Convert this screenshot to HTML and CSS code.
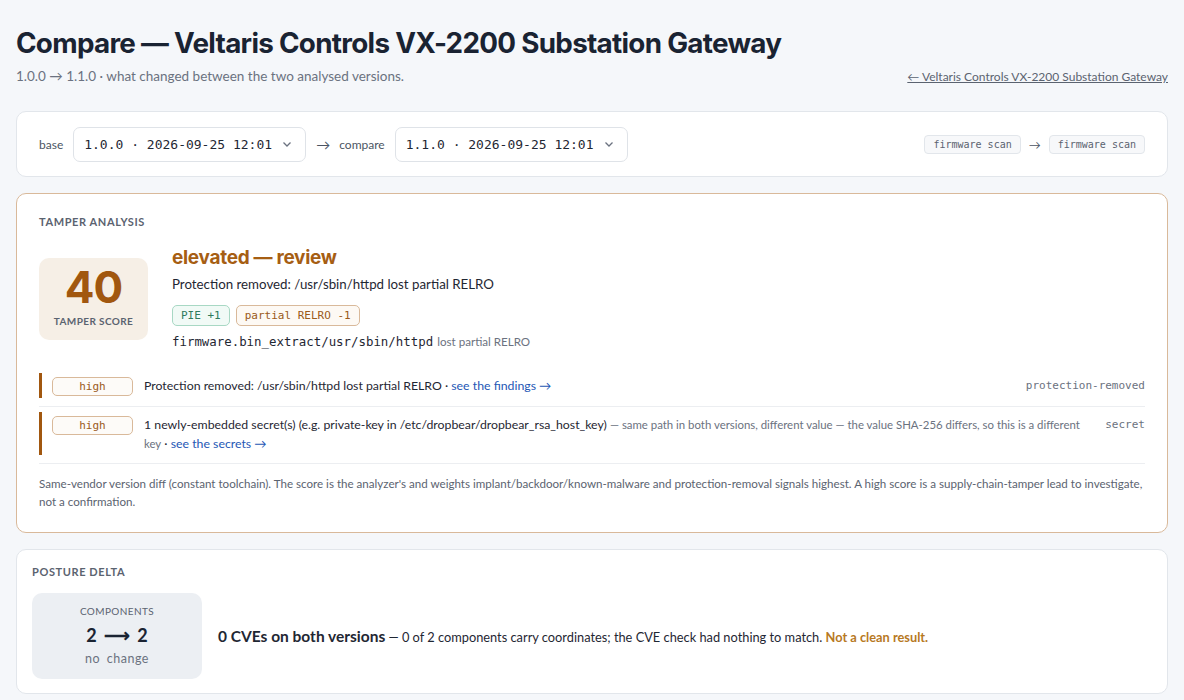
FILE: index.html
```html
<!DOCTYPE html>
<html>
<head>
<meta charset="utf-8">
<link rel="stylesheet" href="styles.css">
</head>
<body>
<div class="page">
  <header class="head">
    <div>
      <h1 class="title">Compare — Veltaris Controls VX-2200 Substation Gateway</h1>
      <div class="sub">1.0.0 → 1.1.0 · what changed between the two analysed versions.</div>
    </div>
    <a class="back" href="#">← Veltaris Controls VX-2200 Substation Gateway</a>
  </header>

  <section class="card picker">
    <span class="lbl">base</span>
    <div class="select"><span>1.0.0 · 2026-09-25 12:01</span><svg class="chev" viewBox="0 0 12 12" width="12" height="12"><path d="M2.5 4.5 L6 8 L9.5 4.5" fill="none" stroke="#6b7280" stroke-width="1.3"/></svg></div>
    <span class="arr">→</span>
    <span class="lbl">compare</span>
    <div class="select"><span>1.1.0 · 2026-09-25 12:01</span><svg class="chev" viewBox="0 0 12 12" width="12" height="12"><path d="M2.5 4.5 L6 8 L9.5 4.5" fill="none" stroke="#6b7280" stroke-width="1.3"/></svg></div>
    <div class="spacer"></div>
    <span class="kind">firmware scan</span>
    <span class="arr small">→</span>
    <span class="kind">firmware scan</span>
  </section>

  <section class="card tamper">
    <div class="eyebrow">TAMPER ANALYSIS</div>
    <div class="tamper-top">
      <div class="score">
        <div class="num">40</div>
        <div class="score-lbl">TAMPER SCORE</div>
      </div>
      <div class="verdict">
        <div class="level">elevated — review</div>
        <div class="headline">Protection removed: /usr/sbin/httpd lost partial RELRO</div>
        <div class="chips">
          <span class="chip good">PIE +1</span>
          <span class="chip bad">partial RELRO -1</span>
        </div>
        <div class="path"><span class="mono">firmware.bin_extract/usr/sbin/httpd</span> <span class="note">lost partial RELRO</span></div>
      </div>
    </div>
    <div class="findings">
      <div class="finding">
        <span class="sev">high</span>
        <div class="ftext">Protection removed: /usr/sbin/httpd lost partial RELRO · <a href="#">see the findings →</a></div>
        <span class="ftype">protection-removed</span>
      </div>
      <div class="finding">
        <span class="sev">high</span>
        <div class="ftext">1 newly-embedded secret(s) (e.g. private-key in /etc/dropbear/dropbear_rsa_host_key) <span class="dim">— same path in both versions, different value — the value SHA-256 differs, so this is a different</span> <span class="dim">key</span> · <a href="#">see the secrets →</a></div>
        <span class="ftype">secret</span>
      </div>
    </div>
    <p class="foot">Same-vendor version diff (constant toolchain). The score is the analyzer's and weights implant/backdoor/known-malware and protection-removal signals highest. A high score is a supply-chain-tamper lead to investigate, not a confirmation.</p>
  </section>

  <section class="card posture">
    <div class="eyebrow">POSTURE DELTA</div>
    <div class="posture-row">
      <div class="stat">
        <div class="stat-lbl">COMPONENTS</div>
        <div class="stat-val">2 <span class="sarr">⟶</span> 2</div>
        <div class="stat-sub">no change</div>
      </div>
      <div class="cve"><b>0 CVEs on both versions</b> — 0 of 2 components carry coordinates; the CVE check had nothing to match. <span class="warn">Not a clean result.</span></div>
    </div>
  </section>
</div>
</body>
</html>
```
FILE: styles.css
```css
* { box-sizing: border-box; }
html, body { margin: 0; padding: 0; }
body {
  background: #f5f7fa;
  font-family: "Lato", "Noto Sans", sans-serif;
  color: #1f2733;
  overflow: hidden;
}
.page { padding: 27px 16px 0 16px; }
.head { display: flex; justify-content: space-between; align-items: flex-end; }
.title {
  margin: 0;
  font-family: "Inter", sans-serif;
  font-size: 27.8px;
  font-weight: 700;
  letter-spacing: -0.7px;
  color: #1a2332;
  line-height: 32px;
}
.sub { margin-top: 8px; font-size: 13.5px; color: #6b7280; line-height: 18px; }
.back { font-size: 12px; color: #5b6370; text-decoration: underline; line-height: 16px; }

.card {
  background: #fff;
  border: 1px solid #e2e6eb;
  border-radius: 10px;
  margin-top: 16px;
}
.picker {
  margin-top: 26px;
  display: flex; align-items: center;
  padding: 14px 22px;
  height: 66px;
}
.lbl { font-size: 12px; color: #4b5563; margin-right: 10px; }
.select {
  flex: none;
  display: flex; align-items: center; justify-content: space-between;
  height: 35px; width: 233px;
  padding: 0 12px 0 10px;
  border: 1px solid #dfe3e8; border-radius: 7px;
  font-family: "DejaVu Sans Mono", monospace; font-size: 13px; color: #1f2733;
}
.chev { display: block; }
.arr { font-size: 14px; color: #4b5563; margin: 0 9px 0 10px; }
.arr.small { font-size: 12px; margin: 0 8px; }
.spacer { flex: 1; }
.kind {
  font-family: "DejaVu Sans Mono", monospace; font-size: 10px; color: #5b6370;
  border: 1px solid #e2e6eb; background: #f7f8fa; border-radius: 4px;
  padding: 3px 8px;
}

.tamper { border-color: #d9b99a; padding: 21px 22px 21px 22px; }
.eyebrow { font-size: 11px; font-weight: 700; letter-spacing: 0.6px; color: #5b6370; }
.tamper-top { display: flex; margin-top: 18px; gap: 24px; }
.score {
  flex: none;
  width: 109px; height: 82px; margin-top: 12px;
  background: #f6efe6; border-radius: 10px;
  display: flex; flex-direction: column; align-items: center;
  padding-top: 6px;
}
.num { font-family: "Inter", sans-serif; font-size: 44px; font-weight: 700; color: #a1570f; line-height: 46px; letter-spacing: -1px; }
.score-lbl { font-size: 10px; font-weight: 700; color: #5b6370; letter-spacing: 0.4px; margin-top: 5px; }
.verdict { display: flex; flex-direction: column; }
.level { font-family: "Inter", sans-serif; font-size: 19px; font-weight: 700; color: #a65e13; line-height: 24px; letter-spacing: -0.3px; }
.headline { font-size: 13.3px; margin-top: 5px; line-height: 18px; }
.chips { display: flex; gap: 6px; margin-top: 12px; }
.chip {
  font-family: "DejaVu Sans Mono", monospace; font-size: 11px;
  padding: 0 8px; height: 21px; line-height: 19px; border-radius: 5px; border: 1px solid;
}
.chip.good { color: #2f7a5c; border-color: #a8d8c4; background: #f1faf6; }
.chip.bad { color: #9a5a1a; border-color: #d9b99a; background: #fdf9f4; }
.path { margin-top: 4px; line-height: 20px; }
.mono { font-family: "DejaVu Sans Mono", monospace; font-size: 12.4px; color: #1f2733; }
.note { font-size: 11.6px; color: #6b7280; }

.findings { margin-top: 21px; }
.finding {
  display: flex; align-items: flex-start;
  border-left: 3px solid #a1570f;
  padding: 3px 0 2px 10px;
  position: relative;
}
.finding + .finding { margin-top: 14px; }
.finding::after {
  content: ""; position: absolute; left: -3px; right: 0; bottom: -9px;
  border-bottom: 1px solid #eceef1;
}
.sev {
  flex: none; width: 81px; text-align: center;
  font-family: "DejaVu Sans Mono", monospace; font-size: 11px; color: #9a5a1a;
  border: 1px solid #d9b99a; border-radius: 5px; background: #fdfbf8;
  height: 19px; line-height: 17px; margin-top: 1px;
}
.ftext { flex: 1; font-size: 12.3px; line-height: 19px; margin-left: 11px; padding-right: 22px; }
.ftext a { color: #2557b5; text-decoration: none; }
.dim { color: #6b7280; font-size: 11.4px; line-height: 1; }
.ftype { font-family: "DejaVu Sans Mono", monospace; font-size: 11px; color: #6b7280; line-height: 19px; }
.foot { margin: 20px 0 0 0; font-size: 11.6px; color: #5b6370; line-height: 18px; }

.posture { padding: 15px 15px 14px 15px; }
.posture-row { display: flex; align-items: center; margin-top: 15px; gap: 16px; }
.stat {
  flex: none;
  width: 170px; height: 86px; background: #eceff3; border-radius: 10px;
  display: flex; flex-direction: column; align-items: center; justify-content: center;
}
.stat-lbl { font-size: 10px; color: #5b6370; letter-spacing: 0.4px; line-height: 14px; }
.stat-val { font-size: 18px; font-weight: 700; color: #1a2332; margin-top: 6px; line-height: 22px; }
.sarr { margin: 0 3px; }
.stat-sub { font-size: 12.5px; color: #6b7280; letter-spacing: 0.5px; word-spacing: 3px; margin-top: 4px; line-height: 18px; }
.cve { font-size: 12.8px; color: #1f2733; }
.cve b { font-size: 15.5px; font-weight: 700; }
.warn { color: #b7791f; font-weight: 700; }
```
